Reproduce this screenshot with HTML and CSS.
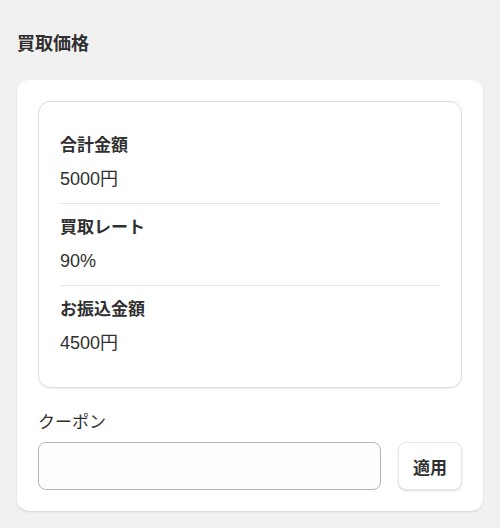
FILE: index.html
```html
<!DOCTYPE html>
<html lang="ja">
<head>
  <meta charset="UTF-8">
  <meta name="viewport" content="width=device-width, initial-scale=1.0">
  <title>買取価格</title>
  <link rel="stylesheet" href="styles.css">
</head>
<body>

  <div class="page">
    <h2 class="title">買取価格</h2>

    <div class="card">
      <div class="summary">
        <div class="row">
          <div class="row-label">合計金額</div>
          <div class="row-value">5000円</div>
        </div>
        <div class="row">
          <div class="row-label">買取レート</div>
          <div class="row-value">90%</div>
        </div>
        <div class="row">
          <div class="row-label">お振込金額</div>
          <div class="row-value">4500円</div>
        </div>
      </div>

      <label class="coupon-label" for="coupon">クーポン</label>
      <div class="coupon">
        <input type="text" id="coupon" name="coupon" autocomplete="off">
        <button type="button" class="apply-btn">適用</button>
      </div>
    </div>
  </div>

</body>
</html>
```

FILE: styles.css
```css
body {
  font-family: 'Liberation Sans', 'Noto Sans CJK JP', sans-serif;
  background-color: #f1f1f1;
  color: #303030;
  margin: 0;
  padding: 0;
}
.page {
  padding: 33px 17px 17px;
}
.title {
  font-size: 18px;
  line-height: 22px;
  font-weight: bold;
  margin: 0 0 25px;
}
.card {
  background: white;
  border-radius: 12px;
  padding: 21px;
  box-shadow: 0 1px 2px rgba(0, 0, 0, 0.12);
}
.summary {
  border: 1px solid #dcdcdc;
  border-radius: 12px;
  padding: 20px 21px 20px;
  box-shadow: 0 1px 1px rgba(0, 0, 0, 0.06);
}
.row {
  padding: 14px 0;
  border-bottom: 1px solid #e6e6e6;
}
.row:last-child {
  border-bottom: none;
}
.row-label {
  font-size: 17px;
  line-height: 20px;
  font-weight: bold;
}
.row-value {
  font-size: 18px;
  line-height: 20px;
  margin-top: 13px;
}
.coupon-label {
  display: block;
  font-size: 17px;
  line-height: 20px;
  margin: 25px 0 9px;
}
.coupon {
  display: flex;
  gap: 17px;
}
.coupon input {
  flex: 1;
  height: 48px;
  box-sizing: border-box;
  border: 1px solid #b5b5b5;
  border-radius: 8px;
  background: #fdfdfd;
  font-size: 16px;
  padding: 0 12px;
  margin: 0;
}
.apply-btn {
  width: 64px;
  height: 48px;
  box-sizing: border-box;
  border: 1px solid #e6e6e6;
  border-radius: 8px;
  background: white;
  color: #303030;
  font-family: inherit;
  font-size: 17px;
  font-weight: bold;
  cursor: pointer;
  box-shadow: 0 1px 2px rgba(0, 0, 0, 0.15);
  margin: 0;
}
```
